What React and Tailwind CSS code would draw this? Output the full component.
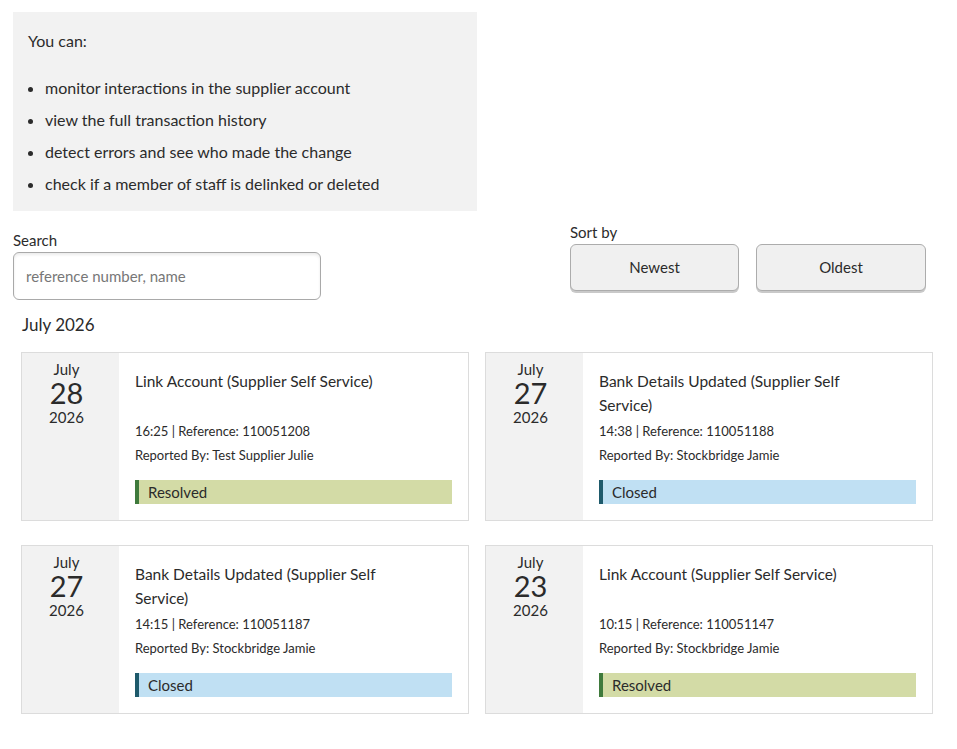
import React from 'react';

const entries = [
  { month: 'July', day: '28', year: '2026', title: 'Link Account (Supplier Self Service)', time: '16:25', ref: '110051208', by: 'Test Supplier Julie', status: 'Resolved' },
  { month: 'July', day: '27', year: '2026', title: 'Bank Details Updated (Supplier Self Service)', time: '14:38', ref: '110051188', by: 'Stockbridge Jamie', status: 'Closed' },
  { month: 'July', day: '27', year: '2026', title: 'Bank Details Updated (Supplier Self Service)', time: '14:15', ref: '110051187', by: 'Stockbridge Jamie', status: 'Closed' },
  { month: 'July', day: '23', year: '2026', title: 'Link Account (Supplier Self Service)', time: '10:15', ref: '110051147', by: 'Stockbridge Jamie', status: 'Resolved' },
];

const StatusBar = ({ status }) => {
  const resolved = status === 'Resolved';
  return (
    <div className={`h-6 flex items-center pl-[9px] text-[15px] border-l-4 ${resolved ? 'bg-[#d3dba6] border-[#3f7a3c]' : 'bg-[#c0e0f3] border-[#1e5a6b]'}`}>
      {status}
    </div>
  );
};

const EntryCard = ({ e }) => (
  <div className="flex border border-[#dcdcdc] bg-white h-[169px]">
    {/* date column */}
    <div className="w-[97px] shrink-0 bg-[#f2f2f2] flex flex-col items-center pt-1 pr-2">
      <span className="text-[15px] leading-6">{e.month}</span>
      <span className="text-[29px] leading-6">{e.day}</span>
      <span className="text-[15px] leading-6">{e.year}</span>
    </div>
    <div className="flex-1 pt-4 px-4 flex flex-col">
      <div className="min-h-[48px] max-w-[270px] text-[15.5px] leading-6">{e.title}</div>
      <div className="text-[13px] leading-6 mt-[2px]">{e.time} | Reference: {e.ref}</div>
      <div className="text-[13px] leading-6">Reported By: {e.by}</div>
      <div className="mt-[13px]">
        <StatusBar status={e.status} />
      </div>
    </div>
  </div>
);

export default function App() {
  return (
    <div className="bg-white min-h-[749px] text-[#2b2b2b] pt-3 pl-[13px] pr-6 pb-6" style={{ fontFamily: 'Lato, "Liberation Sans", sans-serif' }}>
      <div className="w-[464px] bg-[#f2f2f2] px-[15px] pt-[17px] pb-[15px] text-[16px] leading-6">
        <p>You can:</p>
        <ul className="mt-[23px] flex flex-col gap-2 list-disc pl-[17px]">
          <li>monitor interactions in the supplier account</li>
          <li>view the full transaction history</li>
          <li>detect errors and see who made the change</li>
          <li>check if a member of staff is delinked or deleted</li>
        </ul>
      </div>

      <div className="flex items-start">
        <div className="mt-[19px] w-[308px]">
          <label className="block text-[15px] leading-5">Search</label>
          <input
            type="text"
            placeholder="reference number, name"
            className="mt-[2px] w-full h-[48px] rounded-md border border-[#a9a9a9] px-3 text-[15px] placeholder:text-[#777] shadow-[inset_0_2px_3px_rgba(0,0,0,0.08)] outline-none"
          />
        </div>
        <div className="mt-[11px] ml-[249px]">
          <div className="text-[15px] leading-5">Sort by</div>
          <div className="flex gap-[17px] mt-[2px]">
            <button className="w-[169px] h-[47px] rounded-md bg-[#f0f0f0] border border-[#acacac] shadow-[0_2px_0_#c9c9c9] text-[15px]">Newest</button>
            <button className="w-[170px] h-[47px] rounded-md bg-[#f0f0f0] border border-[#acacac] shadow-[0_2px_0_#c9c9c9] text-[15px]">Oldest</button>
          </div>
        </div>
      </div>

      <div className="pl-2 mt-[13px]">
        <h2 className="text-[17px] leading-6 pl-[1px]">July 2026</h2>
        <div className="grid grid-cols-[448px_448px] gap-x-4 gap-y-6 mt-[15px]">
          {entries.map((e, i) => (
            <EntryCard key={i} e={e} />
          ))}
        </div>
      </div>
    </div>
  );
}
